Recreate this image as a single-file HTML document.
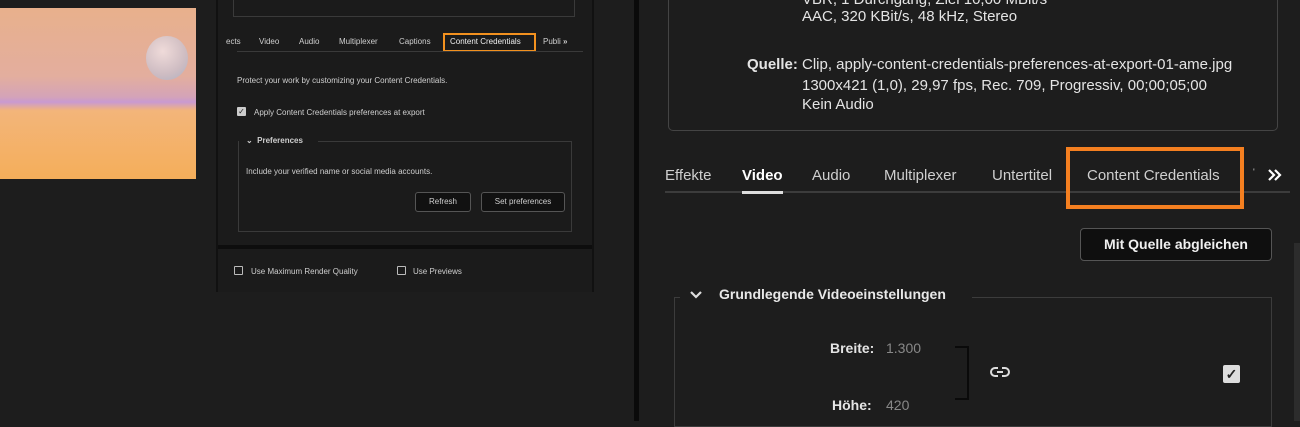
<!DOCTYPE html>
<html><head><meta charset="utf-8"><style>
*{margin:0;padding:0;box-sizing:border-box}
body{width:1300px;height:421px;background:#1d1d1d;position:relative;overflow:hidden;font-family:"Liberation Sans",sans-serif;color:#d8d8d8}
.a{position:absolute;white-space:nowrap}
.s{font-size:8px;color:#cfcfcf}
.r{font-size:15px;color:#e4e4e4;letter-spacing:0}
</style></head><body>
<!-- left image -->
<div class="a" style="left:0;top:8px;width:196px;height:171px;background:linear-gradient(180deg,#e8b08c 0%,#e3ae9e 40%,#d4a3b8 52%,#c99ad0 55%,#f3b57a 60%,#f4ae5a 100%)"></div>
<div class="a" style="left:146px;top:36px;width:42px;height:44px;border-radius:50%;background:radial-gradient(circle at 40% 35%,#f2e6ea,#c9c0cc 60%,#9fb0c8);opacity:.8"></div>
<!-- middle panel -->
<div class="a" style="left:216px;top:0;width:378px;height:292px;background:#1b1b1b;border-left:2px solid #111;border-right:2px solid #111"></div>
<div class="a" style="left:233px;top:0;width:342px;height:17px;border:1px solid #3a3a3a;border-top:none"></div>
<div class="a s" style="left:226px;top:37px">ects</div>
<div class="a s" style="left:259px;top:37px">Video</div>
<div class="a s" style="left:299px;top:37px">Audio</div>
<div class="a s" style="left:339px;top:37px">Multiplexer</div>
<div class="a s" style="left:399px;top:37px">Captions</div>
<div class="a" style="left:443px;top:33px;width:93px;height:19px;border:2px solid #f2911f"></div>
<div class="a s" style="left:450px;top:37px;color:#eee">Content Credentials</div>
<div class="a s" style="left:543px;top:37px">Publi <b>&#187;</b></div>
<div class="a" style="left:237px;top:51px;width:346px;height:1px;background:#3a3a3a"></div>
<div class="a s" style="left:237px;top:76px">Protect your work by customizing your Content Credentials.</div>
<div class="a" style="left:237px;top:107px;width:9px;height:9px;background:#ccc;border-radius:1px;font-size:8px;color:#222;line-height:9px;text-align:center">✓</div>
<div class="a s" style="left:254px;top:108px">Apply Content Credentials preferences at export</div>
<div class="a" style="left:238px;top:141px;width:334px;height:91px;border:1px solid #3a3a3a;border-top:none"></div>
<div class="a" style="left:318px;top:141px;width:254px;height:1px;background:#3a3a3a"></div>
<div class="a s" style="left:246px;top:136px;font-weight:bold">⌄&nbsp;&nbsp;Preferences</div>
<div class="a s" style="left:246px;top:167px">Include your verified name or social media accounts.</div>
<div class="a s" style="left:415px;top:192px;width:56px;height:20px;border:1px solid #555;border-radius:3px;background:#111;text-align:center;line-height:18px">Refresh</div>
<div class="a s" style="left:481px;top:192px;width:84px;height:20px;border:1px solid #555;border-radius:3px;background:#111;text-align:center;line-height:18px">Set preferences</div>
<div class="a" style="left:218px;top:245px;width:374px;height:4px;background:#0d0d0d"></div>
<div class="a" style="left:234px;top:266px;width:9px;height:9px;border:1px solid #bbb;border-radius:1px"></div>
<div class="a s" style="left:251px;top:267px">Use Maximum Render Quality</div>
<div class="a" style="left:397px;top:266px;width:9px;height:9px;border:1px solid #bbb;border-radius:1px"></div>
<div class="a s" style="left:413px;top:267px">Use Previews</div>
<!-- divider -->
<div class="a" style="left:634px;top:0;width:5px;height:421px;background:#0a0a0a"></div>
<!-- right -->
<div class="a" style="left:668px;top:-10px;width:610px;height:141px;border:1px solid #444;border-radius:5px"></div>
<div class="a r" style="left:802px;top:-9px">VBR, 1 Durchgang, Ziel 10,00 MBit/s</div>
<div class="a r" style="left:802px;top:8px">AAC, 320 KBit/s, 48 kHz, Stereo</div>
<div class="a r" style="left:747px;top:56px;font-weight:bold">Quelle:</div>
<div class="a r" style="left:802px;top:56px">Clip, apply-content-credentials-preferences-at-export-01-ame.jpg</div>
<div class="a r" style="left:802px;top:77px">1300x421 (1,0), 29,97 fps, Rec. 709, Progressiv, 00;00;05;00</div>
<div class="a r" style="left:802px;top:96px">Kein Audio</div>
<div class="a r" style="left:665px;top:167px;color:#cfcfcf">Effekte</div>
<div class="a r" style="left:742px;top:167px;color:#fff;font-weight:bold">Video</div>
<div class="a r" style="left:812px;top:167px;color:#cfcfcf">Audio</div>
<div class="a r" style="left:884px;top:167px;color:#cfcfcf">Multiplexer</div>
<div class="a r" style="left:992px;top:167px;color:#cfcfcf">Untertitel</div>
<div class="a r" style="left:1087px;top:167px;color:#cfcfcf">Content Credentials</div>
<div class="a" style="left:1253px;top:167px;font-size:9px;color:#ccc">'</div>
<svg class="a" style="left:1267px;top:168px" width="16" height="14" viewBox="0 0 16 14"><path d="M2 2l5 5-5 5M8 2l5 5-5 5" fill="none" stroke="#fff" stroke-width="2.2"/></svg>
<div class="a" style="left:665px;top:191px;width:625px;height:2px;background:#3c3c3c"></div>
<div class="a" style="left:742px;top:191px;width:41px;height:3px;background:#ddd"></div>
<div class="a" style="left:1066px;top:147px;width:178px;height:62px;border:4px solid #f47f20"></div>
<div class="a" style="left:1294px;top:243px;width:6px;height:178px;background:#2c2c2c"></div>
<div class="a r" style="left:1080px;top:228px;width:192px;height:33px;border:1px solid #555;border-radius:4px;background:#0f0f0f;text-align:center;line-height:31px;color:#f0f0f0;font-weight:bold;font-size:14px">Mit Quelle abgleichen</div>
<div class="a" style="left:674px;top:297px;width:598px;height:130px;border:1px solid #3c3c3c"></div>
<div class="a" style="left:680px;top:285px;width:292px;height:22px;background:#1d1d1d"></div>
<svg class="a" style="left:689px;top:290px" width="14" height="10" viewBox="0 0 14 10"><path d="M2 2l5 5 5-5" fill="none" stroke="#ddd" stroke-width="2.2"/></svg>
<div class="a r" style="left:719px;top:286px;font-weight:bold;color:#e8e8e8;font-size:14px">Grundlegende Videoeinstellungen</div>
<div class="a r" style="left:830px;top:340px;font-weight:bold;font-size:14px">Breite:</div>
<div class="a r" style="left:886px;top:340px;color:#888;font-size:14px">1.300</div>
<div class="a r" style="left:832px;top:397px;font-weight:bold;font-size:14px">Höhe:</div>
<div class="a r" style="left:886px;top:397px;color:#888;font-size:14px">420</div>
<div class="a" style="left:955px;top:346px;width:14px;height:54px;border:2px solid #0a0a0a;border-left:none"></div>
<svg class="a" style="left:989px;top:366px" width="22" height="12" viewBox="0 0 22 12"><path d="M9 2H6a4 4 0 0 0 0 8h3M13 2h3a4 4 0 0 1 0 8h-3M8 6h6" fill="none" stroke="#ddd" stroke-width="2"/></svg>
<div class="a" style="left:1223px;top:365px;width:17px;height:18px;background:#ddd;border-radius:2px;color:#222;font-size:14px;line-height:18px;text-align:center;font-weight:bold">✓</div>
</body></html>
